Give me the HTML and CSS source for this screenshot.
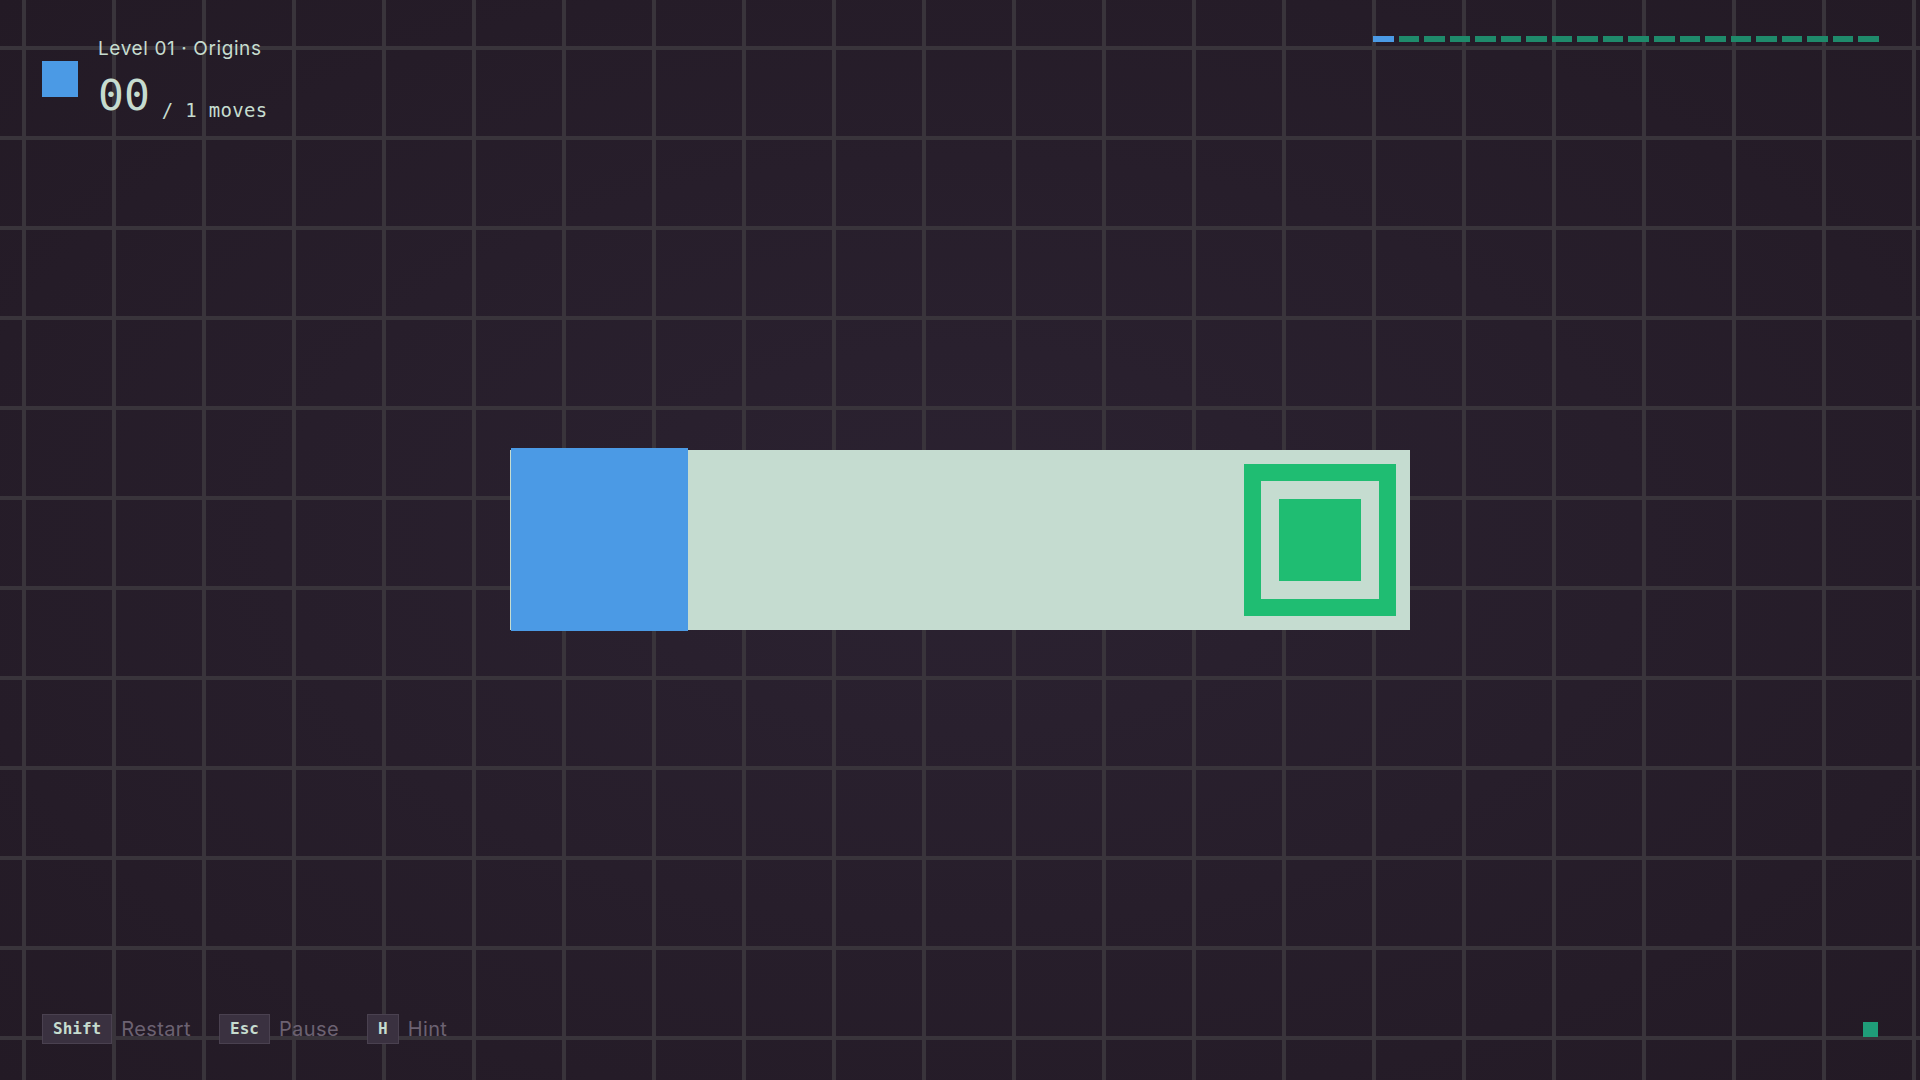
FILE: index.html
```html
<!DOCTYPE html>
<html lang="en">
<head>
  <meta charset="UTF-8" />
  <meta name="viewport" content="width=device-width, initial-scale=1" />
  <title>Level 01 · Origins</title>
  <link rel="stylesheet" href="styles.css">
</head>
<body>
  <main class="stage">
    <div class="board" aria-label="Level board">
      <div class="cell"></div>
      <div class="cell"></div>
      <div class="cell"></div>
      <div class="cell"></div>
      <div class="cell goal-cell">
        <div class="goal"><div class="goal-core"></div></div>
      </div>
      <div class="player"></div>
    </div>
  </main>

  <header class="hud">
    <div class="level-info">
      <div class="swatch"></div>
      <div class="level-text">
        <div class="level-title">Level 01 · Origins</div>
        <div class="counter"><span class="moves-done">00</span><span class="moves-par">/ 1 moves</span></div>
      </div>
    </div>
    <div class="progress" aria-label="Level progress">
      <span class="pip current"></span>
      <span class="pip"></span><span class="pip"></span><span class="pip"></span><span class="pip"></span>
      <span class="pip"></span><span class="pip"></span><span class="pip"></span><span class="pip"></span>
      <span class="pip"></span><span class="pip"></span><span class="pip"></span><span class="pip"></span>
      <span class="pip"></span><span class="pip"></span><span class="pip"></span><span class="pip"></span>
      <span class="pip"></span><span class="pip"></span><span class="pip"></span>
    </div>
  </header>

  <footer class="keys">
    <div class="hints">
      <div class="hint"><kbd>Shift</kbd><span>Restart</span></div>
      <div class="hint"><kbd>Esc</kbd><span>Pause</span></div>
      <div class="hint"><kbd>H</kbd><span>Hint</span></div>
    </div>
    <div class="status-dot"></div>
  </footer>
</body>
</html>
```

FILE: styles.css
```css
html, body {
  margin: 0;
  padding: 0;
  width: 100%;
  height: 100%;
  overflow: hidden;
}
body {
  font-family: 'Inter', 'Noto Sans', sans-serif;
  color: #c6dccf;
  background-color: #251c27;
  background-image:
    linear-gradient(to right, #39343b 4px, transparent 4px),
    linear-gradient(to bottom, #39343b 4px, transparent 4px),
    radial-gradient(ellipse at center, #2b2231 0%, #231a25 100%);
  background-size: 90px 90px, 90px 90px, 100% 100%;
  background-position: 22px 46px, 22px 46px, 0 0;
  position: relative;
}

/* board */
.stage {
  height: 100vh;
  display: flex;
  align-items: center;
  justify-content: center;
}
.board {
  position: relative;
  display: flex;
  background: #c5dcd0;
}
.cell {
  width: 180px;
  height: 180px;
  display: flex;
  align-items: center;
  justify-content: center;
}
.goal {
  width: 118px;
  height: 118px;
  border: 17px solid #1fbd72;
  display: flex;
  align-items: center;
  justify-content: center;
}
.goal-core {
  width: 82px;
  height: 82px;
  background: #1fbd72;
}
.player {
  position: absolute;
  left: 1px;
  top: -2px;
  width: 177px;
  height: 183px;
  background: #4b9ae5;
}

/* top hud */
.hud {
  position: absolute;
  top: 0; left: 0; right: 0;
  padding: 36px 41px 0 42px;
  display: flex;
  justify-content: space-between;
  align-items: flex-start;
}
.level-info {
  display: flex;
  align-items: flex-start;
  gap: 20px;
}
.swatch {
  width: 36px;
  height: 36px;
  margin-top: 25px;
  background: #4b9ae5;
}
.level-title {
  font-size: 19px;
  line-height: 26px;
  letter-spacing: 0.6px;
}
.counter {
  font-family: 'DejaVu Sans Mono', 'Liberation Mono', monospace;
  white-space: nowrap;
  line-height: 66px;
}
.moves-done {
  font-size: 43px;
}
.moves-par {
  font-size: 19px;
  margin-left: 12px;
  letter-spacing: 0.3px;
  vertical-align: -7px;
}
.progress {
  width: 506px;
  display: flex;
  gap: 5px;
}
.pip {
  flex: 1;
  height: 6px;
  background: #1f8a6b;
}
.pip.current {
  background: #4b9ae5;
}

/* bottom hints */
.keys {
  position: absolute;
  left: 0; right: 0; bottom: 0;
  padding: 0 42px 36px 42px;
  display: flex;
  justify-content: space-between;
  align-items: center;
}
.hints {
  display: flex;
  gap: 28px;
}
.hint {
  display: flex;
  align-items: center;
  gap: 9px;
}
.hint kbd {
  font-family: 'DejaVu Sans Mono', 'Liberation Mono', monospace;
  font-weight: bold;
  font-size: 16px;
  color: #c6dccf;
  height: 28px;
  line-height: 28px;
  padding: 0 10px;
  background: #3a3140;
  border: 1px solid #4a4150;
}
.hint span {
  font-size: 20px;
  letter-spacing: 0.4px;
  color: #6c6272;
}
.status-dot {
  width: 15px;
  height: 15px;
  background: #1f9d79;
}
```
